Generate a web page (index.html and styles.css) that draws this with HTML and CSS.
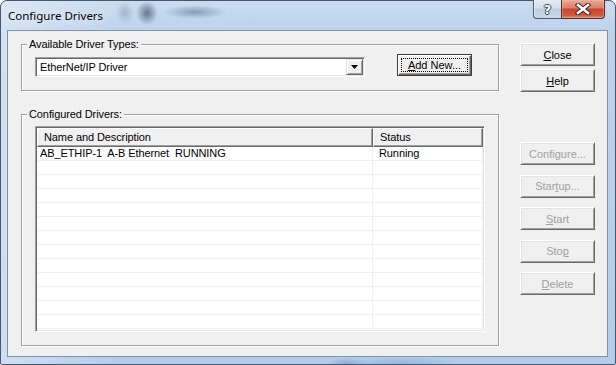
FILE: index.html
```html
<!DOCTYPE html>
<html lang="en">
<head>
    <meta charset="UTF-8">
    <title>Configure Drivers</title>
    <link rel="stylesheet" href="styles.css">
</head>
<body>
    <div class="window">
        <div class="titlebar">
            <span class="title">Configure Drivers</span>
            <div class="caption-buttons">
                <span class="cap-btn cap-help">?</span>
                <span class="cap-btn cap-close">
                    <svg width="16" height="12" viewBox="0 0 16 12">
                        <path d="M3 2 L13 10 M13 2 L3 10" stroke="#3a2a28" stroke-width="4.6" stroke-linecap="square"/>
                        <path d="M3 2 L13 10 M13 2 L3 10" stroke="#fff" stroke-width="2.6" stroke-linecap="square"/>
                    </svg>
                </span>
            </div>
        </div>

        <div class="client">
            <div class="main">
                <div class="group group-types">
                    <div class="group-title">Available Driver Types:</div>
                    <div class="types-row">
                        <div class="combo">
                            <span class="combo-text">EtherNet/IP Driver</span>
                            <span class="combo-btn">
                                <svg width="7" height="4" viewBox="0 0 7 4"><path d="M0 0 H7 L3.5 4 Z" fill="#000"/></svg>
                            </span>
                        </div>
                        <button class="btn btn-default" type="button"><span class="focus"><u>A</u>dd New...</span></button>
                    </div>
                </div>

                <div class="group group-drivers">
                    <div class="group-title">Configured Drivers:</div>
                    <div class="listview">
                        <div class="lv-header">
                            <div class="lv-head col-name">Name and Description</div>
                            <div class="lv-head col-status">Status</div>
                        </div>
                        <div class="lv-body">
                            <div class="lv-row"><div class="cell col-name">AB_ETHIP-1  A-B Ethernet  RUNNING</div><div class="cell col-status">Running</div></div>
                            <div class="lv-row"><div class="cell col-name"></div><div class="cell col-status"></div></div>
                            <div class="lv-row"><div class="cell col-name"></div><div class="cell col-status"></div></div>
                            <div class="lv-row"><div class="cell col-name"></div><div class="cell col-status"></div></div>
                            <div class="lv-row"><div class="cell col-name"></div><div class="cell col-status"></div></div>
                            <div class="lv-row"><div class="cell col-name"></div><div class="cell col-status"></div></div>
                            <div class="lv-row"><div class="cell col-name"></div><div class="cell col-status"></div></div>
                            <div class="lv-row"><div class="cell col-name"></div><div class="cell col-status"></div></div>
                            <div class="lv-row"><div class="cell col-name"></div><div class="cell col-status"></div></div>
                            <div class="lv-row"><div class="cell col-name"></div><div class="cell col-status"></div></div>
                            <div class="lv-row"><div class="cell col-name"></div><div class="cell col-status"></div></div>
                            <div class="lv-row"><div class="cell col-name"></div><div class="cell col-status"></div></div>
                            <div class="lv-row"><div class="cell col-name"></div><div class="cell col-status"></div></div>
                        </div>
                    </div>
                </div>
            </div>

            <div class="side">
                <div class="side-top">
                    <button class="btn" type="button"><u>C</u>lose</button>
                    <button class="btn" type="button"><u>H</u>elp</button>
                </div>
                <div class="side-actions">
                    <button class="btn" type="button" disabled>Confi<u>g</u>ure...</button>
                    <button class="btn" type="button" disabled>Star<u>t</u>up...</button>
                    <button class="btn" type="button" disabled><u>S</u>tart</button>
                    <button class="btn" type="button" disabled>Sto<u>p</u></button>
                    <button class="btn" type="button" disabled><u>D</u>elete</button>
                </div>
            </div>
        </div>
    </div>
</body>
</html>
```

FILE: styles.css
```css
body {
    margin: 0;
    overflow: hidden;
    background: #fff;
    font-family: "Liberation Sans", Arial, sans-serif;
}

/* window frame (aero glass) */
.window {
    width: 616px;
    height: 365px;
    box-sizing: border-box;
    display: flex;
    flex-direction: column;
    padding: 0 7px 7px 6px;
    border: 1px solid #47586b;
    border-radius: 7px 7px 2px 2px;
    background:
        radial-gradient(ellipse 9px 11px at 124px 12px, rgba(150, 165, 185, 0.7), transparent),
        radial-gradient(ellipse 11px 12px at 146px 12px, rgba(70, 85, 105, 0.75), transparent),
        radial-gradient(ellipse 32px 7px at 194px 11px, rgba(65, 85, 115, 0.45), transparent),
        radial-gradient(ellipse 60px 6px at 400px 362px, rgba(120, 160, 210, 0.5), transparent),
        radial-gradient(ellipse 20px 5px at 345px 362px, rgba(110, 150, 200, 0.6), transparent),
        linear-gradient(to right, rgba(255, 255, 255, 0.35), rgba(255, 255, 255, 0) 120px),
        linear-gradient(to bottom, #cadcf0 0, #bcd3ec 30px, #b3cdea 100%);
}

.titlebar {
    height: 29px;
    flex-shrink: 0;
    display: flex;
    align-items: flex-start;
}

.title {
    margin-left: 1px;
    line-height: 29px;
    font-family: "Noto Sans", "Open Sans", sans-serif;
    font-size: 11.5px;
    color: #000;
    text-shadow: 0 0 6px rgba(255, 255, 255, 0.9);
}

.caption-buttons {
    margin-left: auto;
    margin-right: 3px;
    margin-top: -1px;
    display: flex;
}

.cap-btn {
    height: 19px;
    box-sizing: border-box;
    display: flex;
    align-items: center;
    justify-content: center;
    border: 1px solid #4d5c6e;
    border-top: none;
}

.cap-help {
    width: 28px;
    border-right: none;
    border-radius: 0 0 0 4px;
    background: linear-gradient(to bottom, #e3ebf4 0, #d3deeb 45%, #bccde0 50%, #c9d9ea 100%);
    box-shadow: inset 1px 0 rgba(255, 255, 255, 0.6);
    font-family: "DejaVu Sans", sans-serif;
    font-weight: bold;
    font-size: 13px;
    color: #fff;
    text-shadow: 1px 0 #3d4552, -1px 0 #3d4552, 0 1px #3d4552, 0 -1px #3d4552;
}

.cap-close {
    width: 44px;
    border-color: #5b2a20;
    border-radius: 0 0 4px 0;
    background: linear-gradient(to bottom, #e9a999 0, #dc7d68 45%, #c7452d 50%, #cf5940 85%, #e08a6f 100%);
    box-shadow: inset 0 0 0 1px rgba(255, 200, 180, 0.35);
}

/* client area */
.client {
    flex: 1;
    display: grid;
    grid-template-columns: 478px 75px;
    column-gap: 21px;
    padding: 13px 12px 0 13px;
    background: #f0f0f0;
    border: 1px solid #7f92a8;
    font-size: 11px;
    letter-spacing: -0.1px;
    color: #000;
}

.group {
    box-sizing: border-box;
    border: 1px solid #a0a0a0;
    box-shadow: 1px 1px 0 #fff, inset 1px 1px 0 #fff;
}

.group-types {
    height: 47px;
}

.group-drivers {
    height: 232px;
    margin-top: 23px;
}

.group-title {
    display: table;
    margin: -7px 0 0 5px;
    padding: 0 2px;
    line-height: 13px;
    background: #f0f0f0;
}

.types-row {
    display: flex;
    align-items: flex-start;
    margin-top: 3px;
    padding-left: 13px;
}

/* combo box */
.combo {
    width: 330px;
    height: 20px;
    margin-top: 3px;
    box-sizing: border-box;
    display: flex;
    background: #fff;
    border: 1px solid;
    border-color: #a0a0a0 #fff #fff #a0a0a0;
    box-shadow: inset 1px 1px #696969, inset -1px -1px #e3e3e3;
    padding: 1px;
}

.combo-text {
    flex: 1;
    padding-left: 3px;
    line-height: 16px;
}

.combo-btn {
    width: 17px;
    height: 16px;
    box-sizing: border-box;
    display: flex;
    align-items: center;
    justify-content: center;
    background: #f0f0f0;
    border: 1px solid;
    border-color: #e3e3e3 #696969 #696969 #e3e3e3;
    box-shadow: inset 1px 1px #fff, inset -1px -1px #a0a0a0;
}

/* buttons */
.btn {
    width: 75px;
    height: 23px;
    padding: 0;
    box-sizing: border-box;
    background: #f0f0f0;
    border: 1px solid;
    border-color: #fff #696969 #696969 #fff;
    box-shadow: inset 1px 1px #e3e3e3, inset -1px -1px #a0a0a0;
    font-family: "Liberation Sans", Arial, sans-serif;
    font-size: 11px;
    color: #000;
    border-radius: 0;
}

.btn:disabled {
    color: #a0a0a0;
}

.btn-default {
    height: 22px;
    margin-left: 32px;
    border-color: #3c3c3c;
    box-shadow: inset 1px 1px #fff, inset -1px -1px #696969, inset -2px -2px #a0a0a0;
    display: flex;
    padding: 3px;
}

.focus {
    flex: 1;
    display: flex;
    align-items: center;
    justify-content: center;
    border: 1px dotted #000;
}

.side {
    margin-top: -1px;
}

.side-top {
    display: flex;
    flex-direction: column;
    gap: 3px;
}

.side-actions {
    display: flex;
    flex-direction: column;
    gap: 9.5px;
    margin-top: 50px;
}

/* list view */
.listview {
    width: 450px;
    height: 206px;
    margin: 5px 0 0 13px;
    box-sizing: border-box;
    background: #fff;
    border: 1px solid;
    border-color: #a0a0a0 #fff #fff #a0a0a0;
    box-shadow: inset 1px 1px #696969, inset -1px -1px #e3e3e3;
    padding: 1px;
    overflow: hidden;
}

.lv-header {
    display: flex;
    height: 19px;
}

.lv-head {
    box-sizing: border-box;
    padding-left: 6px;
    line-height: 16px;
    background: #f0f0f0;
    border: 1px solid;
    border-color: #fff #696969 #696969 #fff;
    box-shadow: inset -1px -1px #a0a0a0;
}

.col-name {
    width: 336px;
}

.col-status {
    width: 110px;
}

.lv-row {
    display: flex;
    height: 14px;
    box-sizing: border-box;
    border-bottom: 1px solid #f0f0f0;
}

.cell {
    box-sizing: border-box;
    line-height: 13px;
    white-space: pre;
}

.cell.col-name {
    padding-left: 3px;
    border-right: 1px solid #f0f0f0;
}

.cell.col-status {
    padding-left: 6px;
    border-right: 1px solid #f0f0f0;
}
```
